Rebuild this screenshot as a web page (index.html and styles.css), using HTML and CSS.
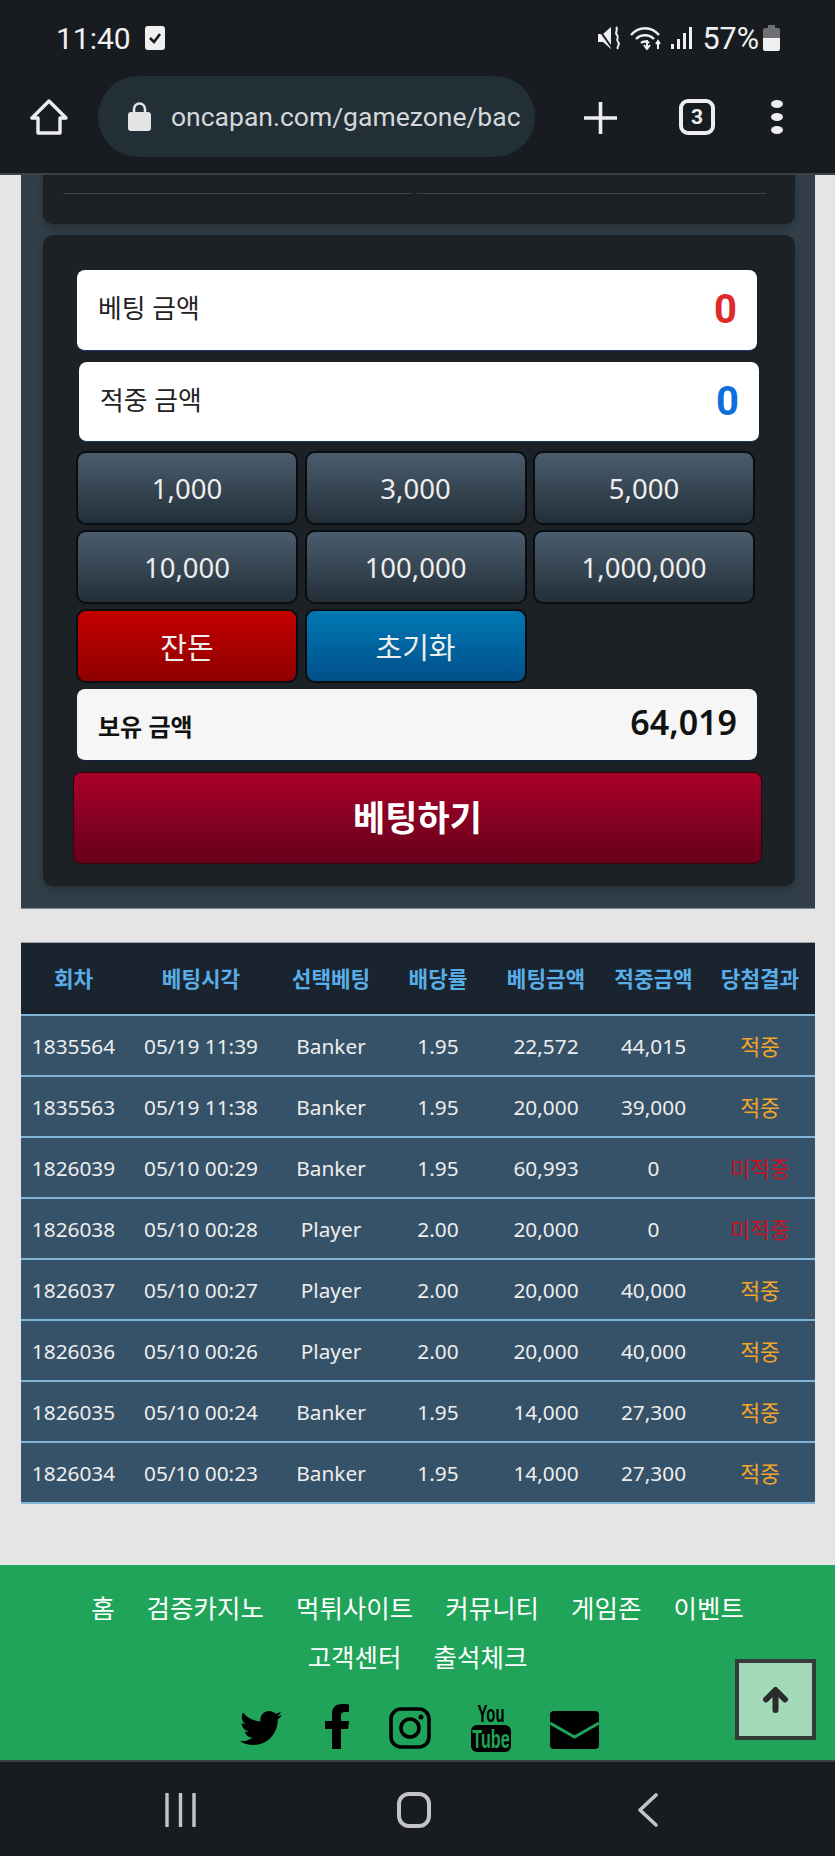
FILE: index.html
```html
<!DOCTYPE html>
<html lang="ko">
<head>
    <meta charset="utf-8" />
    <meta name="viewport" content="width=device-width, initial-scale=1.0">
    <title>oncapan gamezone</title>
    <link rel="stylesheet" href="styles.css">
</head>
<body>
    <div class="page">
        <div class="status">
            <span class="clock">11:40</span>
            <svg class="check" viewBox="0 0 20 24"><rect width="20" height="24" rx="3" fill="#f0f0f0"/><path d="M5 12l4 4 6-8" fill="none" stroke="#181c20" stroke-width="2.6"/></svg>
            <span class="status-gap"></span>
            <svg class="mute" viewBox="0 0 24 24"><path d="M1 8h5l8-7v22l-8-7H1z" fill="#f0f0f0"/><path d="M1 2l14 20" stroke="#181c20" stroke-width="2"/><path d="M19 1c3 3-2 5 1 8s-2 4 1 7-2 4 0 7" fill="none" stroke="#f0f0f0" stroke-width="2"/></svg>
            <svg class="wifi" viewBox="0 0 34 24"><g fill="none" stroke="#f0f0f0" stroke-width="2.4"><path d="M1 9c8-9 20-9 28 0"/><path d="M6 13c5-5 13-5 18 0"/><path d="M11 17c2-2 6-2 8 0"/></g><path d="M17 14v8m-3-3l3 4 3-4M28 23v-8m-2 3l2-3 2 3" fill="none" stroke="#f0f0f0" stroke-width="2"/></svg>
            <svg class="signal" viewBox="0 0 22 24"><path d="M1 18h3v5H1zM7 13h3v10H7zM13 7h3v16h-3zM19 1h3v22h-3z" fill="#f0f0f0"/></svg>
            <span class="battery-text">57%</span>
            <svg class="battery" viewBox="0 0 17 26"><path d="M5 0h7v3h3a2 2 0 0 1 2 2v8H0V5a2 2 0 0 1 2-2h3z" fill="#6e7072"/><path d="M0 13h17v11a2 2 0 0 1-2 2H2a2 2 0 0 1-2-2z" fill="#f0f0f0"/></svg>
        </div>

        <div class="toolbar">
            <svg class="home-icon" viewBox="0 0 38 36"><path d="M19 2L2 19h6v15h22V19h6z" fill="none" stroke="#eeeeee" stroke-width="3.4" stroke-linejoin="round"/></svg>
            <div class="url-bar">
                <svg class="lock" viewBox="0 0 23 29"><path d="M6 12V7a5.500 5.500 0 0 1 11 0v5" fill="none" stroke="#e2e4e6" stroke-width="2.6"/><rect y="10" width="23" height="19" rx="3" fill="#e2e4e6"/></svg>
                <span class="url-text">oncapan.com/gamezone/bac</span>
            </div>
            <svg class="plus" viewBox="0 0 33 32"><path d="M0 16h33M16.500 0v32" stroke="#eeeeee" stroke-width="3.600"/></svg>
            <div class="tabs">3</div>
            <div class="dots"><span></span><span></span><span></span></div>
        </div>

        <div class="panel">
            <div class="card card-top">
                <div class="top-line"></div>
                <div class="top-line"></div>
            </div>
            <div class="card card-bet">
                <div class="amount">
                    <span>베팅 금액</span>
                    <b class="red">0</b>
                </div>
                <div class="amount amount-win">
                    <span>적중 금액</span>
                    <b class="blue">0</b>
                </div>
                <div class="chips">
                    <button class="chip">1,000</button>
                    <button class="chip">3,000</button>
                    <button class="chip">5,000</button>
                    <button class="chip">10,000</button>
                    <button class="chip">100,000</button>
                    <button class="chip">1,000,000</button>
                    <button class="chip chip-red">잔돈</button>
                    <button class="chip chip-blue">초기화</button>
                </div>
                <div class="holding">
                    <b class="holding-label">보유 금액</b>
                    <b class="holding-value">64,019</b>
                </div>
                <button class="bet-btn">베팅하기</button>
            </div>
        </div>

        <table class="history">
            <colgroup>
                <col class="c1"><col class="c2"><col class="c3"><col class="c4"><col class="c5"><col class="c6"><col class="c7">
            </colgroup>
            <thead>
                <tr><th>회차</th><th>베팅시각</th><th>선택베팅</th><th>배당률</th><th>베팅금액</th><th>적중금액</th><th>당첨결과</th></tr>
            </thead>
            <tbody>
                <tr><td>1835564</td><td>05/19 11:39</td><td>Banker</td><td>1.95</td><td>22,572</td><td>44,015</td><td class="hit">적중</td></tr>
                <tr><td>1835563</td><td>05/19 11:38</td><td>Banker</td><td>1.95</td><td>20,000</td><td>39,000</td><td class="hit">적중</td></tr>
                <tr><td>1826039</td><td>05/10 00:29</td><td>Banker</td><td>1.95</td><td>60,993</td><td>0</td><td class="miss">미적중</td></tr>
                <tr><td>1826038</td><td>05/10 00:28</td><td>Player</td><td>2.00</td><td>20,000</td><td>0</td><td class="miss">미적중</td></tr>
                <tr><td>1826037</td><td>05/10 00:27</td><td>Player</td><td>2.00</td><td>20,000</td><td>40,000</td><td class="hit">적중</td></tr>
                <tr><td>1826036</td><td>05/10 00:26</td><td>Player</td><td>2.00</td><td>20,000</td><td>40,000</td><td class="hit">적중</td></tr>
                <tr><td>1826035</td><td>05/10 00:24</td><td>Banker</td><td>1.95</td><td>14,000</td><td>27,300</td><td class="hit">적중</td></tr>
                <tr><td>1826034</td><td>05/10 00:23</td><td>Banker</td><td>1.95</td><td>14,000</td><td>27,300</td><td class="hit">적중</td></tr>
            </tbody>
        </table>

        <div class="footer">
            <div class="foot-links">
                <a>홈</a><a>검증카지노</a><a>먹튀사이트</a><a>커뮤니티</a><a>게임존</a><a>이벤트</a><a>고객센터</a><a>출석체크</a>
            </div>
            <div class="social">
                <svg class="ico-tw" viewBox="0 48 512 416" preserveAspectRatio="none"><path d="M459.37 151.716c.325 4.548.325 9.097.325 13.645 0 138.72-105.583 298.558-298.558 298.558-59.452 0-114.68-17.219-161.137-47.106 8.447.974 16.568 1.299 25.34 1.299 49.055 0 94.213-16.568 130.274-44.832-46.132-.975-84.792-31.188-98.112-72.772 6.498.974 12.995 1.624 19.818 1.624 9.421 0 18.843-1.3 27.614-3.573-48.081-9.747-84.143-51.98-84.143-102.985v-1.299c13.969 7.797 30.214 12.67 47.431 13.319-28.264-18.843-46.781-51.005-46.781-87.391 0-19.492 5.197-37.36 14.294-52.954 51.655 63.675 129.3 105.258 216.365 109.807-1.624-7.797-2.599-15.918-2.599-24.04 0-57.828 46.782-104.934 104.934-104.934 30.213 0 57.502 12.67 76.67 33.137 23.715-4.548 46.456-13.32 66.599-25.34-7.798 24.366-24.366 44.833-46.132 57.827 21.117-2.273 41.584-8.122 60.426-16.243-14.292 20.791-32.161 39.308-52.628 54.253z"/></svg>
                <svg class="ico-fb" viewBox="0 0 24 45"><path d="M7 45V25H0v-8h7v-7C7 3 11 0 17 0c3 0 6 .3 7 .5V8h-4c-3 0-4 1.500-4 4v5h8l-1 8h-7v20z"/></svg>
                <svg class="ico-ig" viewBox="0 0 42 42"><rect x="2" y="2" width="38" height="38" rx="10" fill="none" stroke="#000" stroke-width="3.600"/><circle cx="21" cy="21" r="9" fill="none" stroke="#000" stroke-width="3.600"/><circle cx="32" cy="10" r="2.500"/></svg>
                <svg class="ico-yt" viewBox="0 -8 40 64"><text class="yt-you" text-anchor="middle" transform="translate(20 18) scale(.62 1)">You</text><rect y="21" width="40" height="27" rx="6"/><text class="yt-tube" text-anchor="middle" transform="translate(20 44) scale(.62 1)">Tube</text></svg>
                <svg class="ico-mail" viewBox="0 0 49 38"><path d="M4 0h41a4 4 0 0 1 4 4v30a4 4 0 0 1-4 4H4a4 4 0 0 1-4-4V4a4 4 0 0 1 4-4z"/><path d="M0 12l24.500 14L49 12" fill="none" stroke="#20a45a" stroke-width="3"/></svg>
            </div>
            <button class="to-top">
                <svg viewBox="0 0 27 27"><path d="M13.500 24V5M4 13.500L13.500 4 23 13.500" fill="none" stroke="#2b2b2b" stroke-width="6" stroke-linecap="round" stroke-linejoin="round"/></svg>
            </button>
        </div>

        <div class="navbar">
            <svg class="nav-bars" viewBox="0 0 31 34"><path d="M2 1v32M15.500 1v32M29 1v32" stroke="#c4c4c4" stroke-width="3.400" stroke-linecap="round"/></svg>
            <svg class="nav-home" viewBox="0 0 34 36"><rect x="2" y="2" width="30" height="32" rx="10" fill="none" stroke="#c4c4c4" stroke-width="4"/></svg>
            <svg class="nav-back" viewBox="0 0 20 34"><path d="M18 2L2 17l16 15" fill="none" stroke="#c4c4c4" stroke-width="3.600" stroke-linecap="round" stroke-linejoin="round"/></svg>
        </div>
    </div>
</body>
</html>
```

FILE: styles.css
```css
body {
    margin: 0;
    background: #e5e5e5;
    font-family: "Noto Sans", "Noto Sans CJK KR", sans-serif;
}
svg {
    display: block;
    flex: none;
}
button {
    font-family: inherit;
    padding: 0;
    cursor: pointer;
}
.page {
    position: relative;
    width: 835px;
    height: 1856px;
    overflow: hidden;
}

/* phone bars */
.status {
    display: flex;
    align-items: center;
    height: 76px;
    box-sizing: border-box;
    padding: 0 55px 0 56px;
    background: #181c20;
    color: #f0f0f0;
    font-family: Roboto, sans-serif;
}
.clock {
    font-size: 30px;
    margin-right: 14px;
}
.check {
    width: 20px;
    height: 24px;
}
.status-gap {
    flex: 1;
}
.mute {
    width: 24px;
    height: 24px;
    margin-right: 9px;
}
.wifi {
    width: 34px;
    height: 24px;
    margin-right: 6px;
}
.signal {
    width: 22px;
    height: 24px;
    margin-right: 10px;
}
.battery-text {
    font-size: 30.500px;
    margin-right: 4px;
}
.battery {
    width: 17px;
    height: 26px;
}
.toolbar {
    display: flex;
    align-items: flex-start;
    height: 99px;
    box-sizing: border-box;
    background: #181c20;
    border-bottom: 2px solid #3c4248;
    color: #eeeeee;
}
.home-icon {
    width: 38px;
    height: 36px;
    margin: 23px 0 0 30px;
}
.url-bar {
    display: flex;
    align-items: center;
    width: 437px;
    height: 81px;
    margin-left: 30px;
    padding-left: 30px;
    box-sizing: border-box;
    border-radius: 41px;
    background: #222f37;
}
.lock {
    width: 23px;
    height: 29px;
    margin-right: 20px;
}
.url-text {
    font-family: Roboto, sans-serif;
    font-size: 26.500px;
    color: #d4d8da;
    white-space: nowrap;
}
.plus {
    width: 33px;
    height: 32px;
    margin: 26px 0 0 49px;
}
.tabs {
    width: 36px;
    height: 36px;
    box-sizing: border-box;
    margin: 23px 0 0 62px;
    border: 4px solid #eeeeee;
    border-radius: 9px;
    font-family: Roboto, sans-serif;
    font-size: 21px;
    font-weight: 700;
    line-height: 28px;
    text-align: center;
}
.dots {
    display: flex;
    flex-direction: column;
    gap: 5px;
    margin: 24px 0 0 56px;
}
.dots span {
    width: 12px;
    height: 8px;
    border-radius: 50%;
    background: #eeeeee;
}

/* betting panel */
.panel {
    margin: 0 20px 0 21px;
    padding-bottom: 22px;
    background: #323f49;
    border-bottom: 1px solid #7e8c96;
}
.card {
    margin: 0 20px 0 22px;
    border-radius: 10px;
    background: #1b2125;
    box-shadow: 0 4px 8px rgba(0, 0, 0, 0.25);
}
.card-top {
    display: flex;
    gap: 5px;
    height: 49px;
    box-sizing: border-box;
    padding: 18px 29px 0 20px;
    border-radius: 0 0 10px 10px;
}
.top-line {
    flex: 1;
    height: 1px;
    background: #3a4348;
}
.card-bet {
    margin-top: 11px;
    height: 651px;
    box-sizing: border-box;
    padding: 35px 0 0 34px;
}
.amount {
    display: flex;
    justify-content: space-between;
    align-items: center;
    width: 680px;
    height: 81px;
    box-sizing: border-box;
    padding: 0 20px 0 21px;
    border-radius: 8px;
    background: #ffffff;
    border-bottom: 1px solid #1d3a6c;
    color: #222222;
    font-size: 25.800px;
}
.amount span {
    margin-top: -6px;
}
.amount b {
    font-family: Roboto, sans-serif;
    font-size: 40px;
    line-height: 1;
}
.amount-win {
    height: 80px;
    margin: 11px 0 9px 2px;
}
.red {
    color: #e02a2a;
}
.blue {
    color: #0d6fdd;
}
.chips {
    display: grid;
    grid-template-columns: 222px 222px 222px;
    grid-auto-rows: 74px;
    column-gap: 6.500px;
    row-gap: 5px;
    margin-left: -1px;
}
.chip {
    border: 2px solid #0a0d10;
    border-radius: 10px;
    background: linear-gradient(#4a5d6e, #232f38);
    color: #eeeeee;
    font-size: 27.500px;
}
.chip-red {
    background: linear-gradient(#c40000, #8e0000);
    font-size: 29px;
}
.chip-blue {
    background: linear-gradient(#0078b4, #00508a);
    font-size: 29px;
}
.holding {
    display: flex;
    justify-content: space-between;
    align-items: center;
    width: 680px;
    height: 72px;
    box-sizing: border-box;
    margin-top: 6px;
    padding: 0 20px 0 21px;
    border-radius: 8px;
    background: #f6f6f6;
    border-bottom: 1px solid #0c1c44;
    color: #111111;
}
.holding-label {
    font-size: 24px;
    margin-top: 2px;
}
.holding-value {
    font-size: 34px;
    font-weight: 600;
    margin-top: -6px;
}
.bet-btn {
    display: block;
    width: 689px;
    height: 92px;
    margin: 11px 0 0 -4px;
    padding-bottom: 5px;
    border: 1px solid #3a0010;
    border-radius: 8px;
    background: linear-gradient(#a9002a, #66001a);
    color: #ffffff;
    font-size: 35px;
    font-weight: 700;
}

/* history table */
.history {
    width: 794px;
    margin: 33px 0 0 21px;
    border-collapse: collapse;
    table-layout: fixed;
    background: #365268;
    color: #eeeeee;
    font-size: 20.800px;
}
.c1 { width: 105px; }
.c2 { width: 150px; }
.c3 { width: 110px; }
.c4 { width: 104px; }
.c5 { width: 112px; }
.c6 { width: 103px; }
.c7 { width: 110px; }
.history th {
    height: 69px;
    padding: 0 0 2px;
    background: #19242f;
    border-top: 1px solid #9aa2a8;
    color: #5aaee8;
    font-size: 21.300px;
    font-weight: 700;
}
.history td {
    height: 59px;
    padding: 0;
    text-align: center;
    border-top: 2px solid #7fb4d6;
}
.history tr:last-child td {
    border-bottom: 2px solid #7fb4d6;
}
.history td.hit {
    color: #f4a528;
    font-size: 21.600px;
}
.history td.miss {
    color: #c8101e;
    font-size: 21.600px;
}

/* footer */
.footer {
    height: 195px;
    box-sizing: border-box;
    margin-top: 61px;
    padding-top: 19px;
    background: #20a45a;
}
.foot-links {
    display: flex;
    flex-wrap: wrap;
    justify-content: center;
    column-gap: 32px;
    width: 760px;
    margin: 0 auto;
    color: #ffffff;
    font-size: 25.500px;
    line-height: 49px;
}
.foot-links a {
    display: block;
}
.social {
    display: flex;
    align-items: flex-start;
    margin: 22px 0 0 240px;
}
.ico-tw {
    width: 42px;
    height: 34px;
    margin: 7px 43px 0 0;
}
.ico-fb {
    width: 24px;
    height: 45px;
    margin-right: 40px;
}
.ico-ig {
    width: 42px;
    height: 42px;
    margin: 3px 40px 0 0;
}
.ico-yt {
    width: 40px;
    height: 64px;
    margin: -8px 39px 0 0;
}
.ico-mail {
    width: 49px;
    height: 38px;
    margin-top: 7px;
}
.yt-you {
    font-family: "Liberation Sans Narrow", "Liberation Sans", sans-serif;
    font-size: 24px;
    font-weight: 700;
}
.yt-tube {
    font-family: "Liberation Sans Narrow", "Liberation Sans", sans-serif;
    font-size: 26px;
    font-weight: 700;
    fill: #20a45a;
}
.to-top {
    position: absolute;
    left: 735px;
    top: 1659px;
    display: flex;
    align-items: center;
    justify-content: center;
    width: 81px;
    height: 81px;
    border: 4px solid #333a38;
    background: #a3d9b9;
}
.to-top svg {
    width: 27px;
    height: 27px;
}

.navbar {
    position: relative;
    display: flex;
    height: 97px;
    box-sizing: border-box;
    border-top: 2px solid #3d4143;
    background: #181c20;
}
.nav-bars {
    width: 31px;
    height: 34px;
    margin: 31px 0 0 165px;
}
.nav-home {
    width: 34px;
    height: 36px;
    margin: 30px 0 0 201px;
}
.nav-back {
    width: 20px;
    height: 34px;
    margin: 31px 0 0 207px;
}
```
